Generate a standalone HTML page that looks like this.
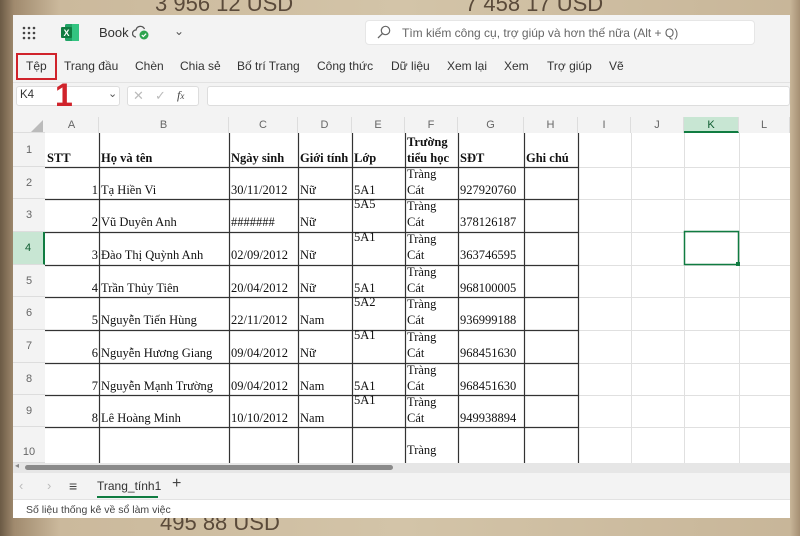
<!DOCTYPE html>
<html><head><meta charset="utf-8"><style>
*{margin:0;padding:0;box-sizing:border-box}
body{width:800px;height:533px;overflow:hidden;position:relative;font-family:"Liberation Sans","DejaVu Sans",sans-serif;background:linear-gradient(90deg,#6b5a45 0px,#a08a6e 14px,#cbb99c 60px,#d3c4a8 400px,#c8b699 790px,#a58f73 800px)}
.abs{position:absolute}
.win{position:absolute;left:13px;top:15px;width:777px;height:503px;background:#f3f3f3}
.t{position:absolute;font-size:12px;color:#333;white-space:nowrap}
.grid{position:absolute;left:13px;top:117px;width:777px;height:346px;background:#fff;overflow:hidden}
.ser{font-family:"Liberation Serif",serif;font-size:12.5px;color:#111}
.cell{position:absolute;white-space:nowrap}
.rh{position:absolute;left:0;width:32px;text-align:center;font-size:11px;color:#666;border-bottom:1px solid #ddd;background:#f3f3f3}
.ch{position:absolute;top:0;height:16px;text-align:center;font-size:11px;color:#666;line-height:16px;border-right:1px solid #ddd;background:#f3f3f3}
</style></head><body>
<div class="abs" style="left:465px;top:-9px;font-size:22px;color:#5a4a3a">7 458 17 USD</div>
<div class="abs" style="left:155px;top:-9px;font-size:22px;color:#5a4a3a">3 956 12 USD</div>
<div class="abs" style="left:160px;top:510px;font-size:22px;color:#5a4a3a">495 88 USD</div>
<div class="win"></div>
<svg class="abs" style="left:22px;top:26px" width="14" height="14"><g fill="#444"><circle cx="2" cy="2" r="1.3"/><circle cx="7" cy="2" r="1.3"/><circle cx="12" cy="2" r="1.3"/><circle cx="2" cy="7" r="1.3"/><circle cx="7" cy="7" r="1.3"/><circle cx="12" cy="7" r="1.3"/><circle cx="2" cy="12" r="1.3"/><circle cx="7" cy="12" r="1.3"/><circle cx="12" cy="12" r="1.3"/></g></svg>
<svg class="abs" style="left:61px;top:24px" width="18" height="17"><rect x="4" y="0" width="14" height="17" rx="1.5" fill="#21a366"/><rect x="11" y="0" width="7" height="17" fill="#33c481"/><rect x="0" y="3" width="11" height="11" rx="1" fill="#107c41"/><text x="2.5" y="12" font-size="9" font-weight="bold" fill="#fff" font-family="Liberation Sans">X</text></svg>
<div class="t" style="left:99px;top:25px;font-size:13px">Book</div>
<svg class="abs" style="left:132px;top:25px" width="18" height="16"><path d="M4 12a3.5 3.5 0 0 1 0-7 4.5 4.5 0 0 1 8.5-1" fill="none" stroke="#555" stroke-width="1.3"/><circle cx="12" cy="10" r="4.5" fill="#2ea44f"/><path d="M9.8 10l1.5 1.5 2.8-2.8" stroke="#fff" fill="none" stroke-width="1.2"/></svg>
<div class="t" style="left:174px;top:24px;font-size:12px;color:#555">⌄</div>
<div class="abs" style="left:365px;top:20px;width:390px;height:25px;background:#fff;border-radius:4px;border:1px solid #e6e6e6"></div>
<svg class="abs" style="left:377px;top:25px" width="14" height="14"><circle cx="8.5" cy="5.5" r="4.2" fill="none" stroke="#666" stroke-width="1.2"/><path d="M5.5 8.5L1 13" stroke="#666" stroke-width="1.3"/></svg>
<div class="t" style="left:402px;top:26px;color:#666;font-size:12px">Tìm kiếm công cụ, trợ giúp và hơn thế nữa (Alt + Q)</div>
<div class="t" style="left:26px;top:59px">Tệp</div>
<div class="abs" style="left:16px;top:53px;width:41px;height:27px;border:2px solid #d0232b"></div>
<div class="t" style="left:64px;top:59px">Trang đầu</div>
<div class="t" style="left:135px;top:59px">Chèn</div>
<div class="t" style="left:180px;top:59px">Chia sẻ</div>
<div class="t" style="left:237px;top:59px">Bố trí Trang</div>
<div class="t" style="left:317px;top:59px">Công thức</div>
<div class="t" style="left:391px;top:59px">Dữ liệu</div>
<div class="t" style="left:447px;top:59px">Xem lại</div>
<div class="t" style="left:504px;top:59px">Xem</div>
<div class="t" style="left:547px;top:59px">Trợ giúp</div>
<div class="t" style="left:609px;top:59px">Vẽ</div>
<div class="abs" style="left:13px;top:82px;width:777px;height:1px;background:#e2e2e2"></div>
<div class="abs" style="left:16px;top:86px;width:104px;height:20px;background:#fff;border:1px solid #ddd;border-radius:3px"></div>
<div class="t" style="left:20px;top:89px;font-size:11.5px">K4</div>
<div class="t" style="left:108px;top:87px;font-size:11px;color:#555">⌄</div>
<div class="abs" style="left:127px;top:86px;width:72px;height:20px;background:#fff;border:1px solid #ddd;border-radius:3px"></div>
<div class="t" style="left:133px;top:88px;font-size:13px;color:#bbb">✕</div>
<div class="t" style="left:155px;top:88px;font-size:13px;color:#bbb">✓</div>
<div class="t" style="left:177px;top:88px;font-size:12px;color:#444;font-family:'Liberation Serif',serif;font-style:italic">f<span style="font-size:9px">x</span></div>
<div class="abs" style="left:207px;top:86px;width:583px;height:20px;background:#fff;border:1px solid #ddd;border-radius:3px"></div>
<div class="abs" style="left:55px;top:79px;font-size:32px;font-weight:bold;color:#d0232b;line-height:32px">1</div>
<div class="grid">
<div class="abs" style="left:0;top:0;width:777px;height:16px;background:#f3f3f3;border-bottom:1px solid #ddd"></div>
<svg class="abs" style="left:18px;top:3px" width="12" height="12"><path d="M12 0V12H0Z" fill="#bbb"/></svg>
<div class="ch" style="left:32px;width:54px">A</div>
<div class="ch" style="left:86px;width:130px">B</div>
<div class="ch" style="left:216px;width:69px">C</div>
<div class="ch" style="left:285px;width:54px">D</div>
<div class="ch" style="left:339px;width:53px">E</div>
<div class="ch" style="left:392px;width:53px">F</div>
<div class="ch" style="left:445px;width:66px">G</div>
<div class="ch" style="left:511px;width:54px">H</div>
<div class="ch" style="left:565px;width:53px">I</div>
<div class="ch" style="left:618px;width:53px">J</div>
<div class="ch" style="left:671px;width:55px;background:#c8e6d3;border-bottom:2px solid #107c41;color:#0e5c30">K</div>
<div class="ch" style="left:726px;width:51px">L</div>
<svg class="abs" style="left:0;top:16px" width="777" height="330">
<g stroke="#e0e0e0" stroke-width="1">
<path d="M618.5 0V330M671.5 0V330M726.5 0V330M565.5 0V330"/>
<path d="M565 34.5H777M565 66.5H777M565 99.5H777M565 132.5H777M565 164.5H777M565 197.5H777M565 230.5H777M565 262.5H777M565 294.5H777"/>
</g>
<g stroke="#333" stroke-width="1.2">
<path d="M86.5 0V330M216.5 0V330M285.5 0V330M339.5 0V330M392.5 0V330M445.5 0V330M511.5 0V330M565.5 0V330"/>
<path d="M32 34.5H565M32 66.5H565M32 99.5H565M32 132.5H565M32 164.5H565M32 197.5H565M32 230.5H565M32 262.5H565M32 294.5H565"/>
</g>
<rect x="671.5" y="98.5" width="54" height="33" fill="none" stroke="#107c41" stroke-width="1.5"/>
<rect x="723" y="129" width="4" height="4" fill="#107c41"/>
</svg>
<div class="abs" style="left:0;top:16px;width:32px;height:330px;background:#f3f3f3;border-right:1px solid #ddd"></div>
<div class="rh" style="top:16px;height:34px;line-height:34px">1</div>
<div class="rh" style="top:50px;height:32px;line-height:32px">2</div>
<div class="rh" style="top:82px;height:33px;line-height:33px">3</div>
<div class="rh" style="top:115px;height:33px;line-height:33px;background:#c8e6d3;border-right:2px solid #107c41;color:#0e5c30">4</div>
<div class="rh" style="top:148px;height:32px;line-height:32px">5</div>
<div class="rh" style="top:180px;height:33px;line-height:33px">6</div>
<div class="rh" style="top:213px;height:33px;line-height:33px">7</div>
<div class="rh" style="top:246px;height:32px;line-height:32px">8</div>
<div class="rh" style="top:278px;height:32px;line-height:32px">9</div>
<div class="rh" style="top:310px;height:36px;line-height:50px">10</div>
<div class="ser">
<b class="cell" style="left:34px;top:34px">STT</b>
<b class="cell" style="left:88px;top:34px">Họ và tên</b>
<b class="cell" style="left:218px;top:34px">Ngày sinh</b>
<b class="cell" style="left:287px;top:34px">Giới tính</b>
<b class="cell" style="left:341px;top:34px">Lớp</b>
<b class="cell" style="left:394px;top:18px">Trường</b>
<b class="cell" style="left:394px;top:34px">tiểu học</b>
<b class="cell" style="left:447px;top:34px">SĐT</b>
<b class="cell" style="left:513px;top:34px">Ghi chú</b>
</div>
<div class="ser" id="rows"></div>
</div>
<div class="abs" style="left:13px;top:463px;width:777px;height:10px;background:#e6e6e6"></div>
<div class="abs" style="left:25px;top:465px;width:368px;height:5px;background:#8a8a8a;border-radius:3px"></div>
<div class="t" style="left:15px;top:461px;font-size:8px;color:#888">◂</div>
<div class="abs" style="left:13px;top:473px;width:777px;height:27px;background:#f3f3f3;border-bottom:1px solid #e2e2e2"></div>
<div class="t" style="left:19px;top:478px;color:#bbb;font-size:13px">‹</div>
<div class="t" style="left:47px;top:478px;color:#bbb;font-size:13px">›</div>
<div class="t" style="left:69px;top:478px;color:#444;font-size:14px">≡</div>
<div class="t" style="left:97px;top:479px;color:#333;font-size:12px">Trang_tính1</div>
<div class="abs" style="left:97px;top:496px;width:61px;height:2px;background:#107c41"></div>
<div class="t" style="left:172px;top:475px;color:#444;font-size:16px">+</div>
<div class="abs" style="left:13px;top:500px;width:777px;height:18px;background:#fff"></div>
<div class="t" style="left:26px;top:504px;font-size:10.5px;color:#444">Số liệu thống kê về sổ làm việc</div>
<script>
var R=[[50,"1","Tạ Hiền  Vi","30/11/2012","Nữ","5A1",0,"927920760"],
[82,"2","Vũ Duyên Anh","#######","Nữ","5A5",1,"378126187"],
[115,"3","Đào Thị Quỳnh  Anh","02/09/2012","Nữ","5A1",1,"363746595"],
[148,"4","Trần Thủy  Tiên","20/04/2012","Nữ","5A1",0,"968100005"],
[180,"5","Nguyễn Tiến  Hùng","22/11/2012","Nam","5A2",1,"936999188"],
[213,"6","Nguyễn  Hương  Giang","09/04/2012","Nữ","5A1",1,"968451630"],
[246,"7","Nguyễn Mạnh  Trường","09/04/2012","Nam","5A1",0,"968451630"],
[278,"8","Lê Hoàng  Minh","10/10/2012","Nam","5A1",1,"949938894"]];
var h="";R.forEach(function(r){var t=r[0],b=t+16;
h+='<div class="cell" style="left:32px;width:53px;text-align:right;top:'+b+'px">'+r[1]+'</div>';
h+='<div class="cell" style="left:88px;top:'+b+'px">'+r[2]+'</div>';
h+='<div class="cell" style="left:218px;top:'+b+'px">'+r[3]+'</div>';
h+='<div class="cell" style="left:287px;top:'+b+'px">'+r[4]+'</div>';
h+='<div class="cell" style="left:341px;top:'+(r[6]?t-2:b)+'px">'+r[5]+'</div>';
h+='<div class="cell" style="left:394px;top:'+t+'px">Tràng</div>';
h+='<div class="cell" style="left:394px;top:'+b+'px">Cát</div>';
h+='<div class="cell" style="left:447px;top:'+b+'px">'+r[7]+'</div>';});
h+='<div class="cell" style="left:394px;top:326px">Tràng</div>';
document.getElementById("rows").innerHTML=h;
</script>
</body></html>
